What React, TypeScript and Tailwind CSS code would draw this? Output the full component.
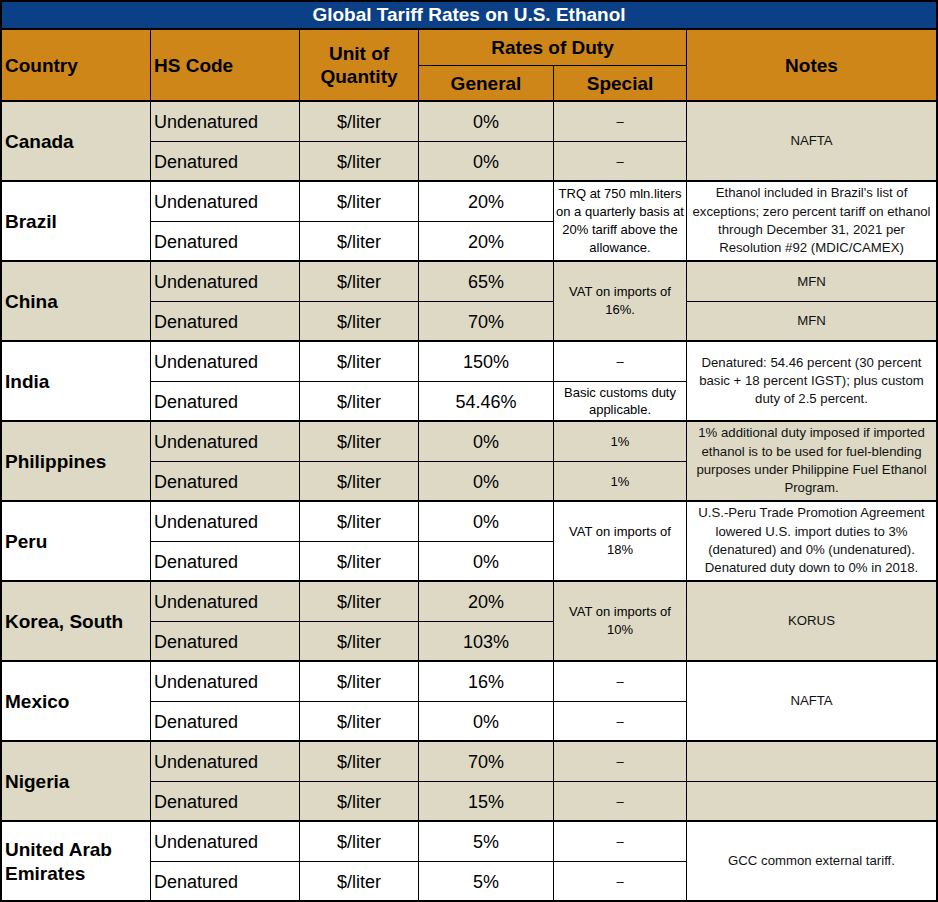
import React from "react";

type Pair = [string, string];

// text lines are given one by one so the wrapping matches the sheet
const rows: {
  name: string[];
  general: Pair;
  special: string[][];
  notes: string[][];
}[] = [
  {
    name: ["Canada"],
    general: ["0%", "0%"],
    special: [["–"], ["–"]],
    notes: [["NAFTA"]],
  },
  {
    name: ["Brazil"],
    general: ["20%", "20%"],
    special: [["TRQ at 750 mln.liters", "on a quarterly basis at", "20% tariff above the", "allowance."]],
    notes: [
      [
        "Ethanol included in Brazil's list of",
        "exceptions; zero percent tariff on ethanol",
        "through December 31, 2021 per",
        "Resolution #92 (MDIC/CAMEX)",
      ],
    ],
  },
  {
    name: ["China"],
    general: ["65%", "70%"],
    special: [["VAT on imports of", "16%."]],
    notes: [["MFN"], ["MFN"]],
  },
  {
    name: ["India"],
    general: ["150%", "54.46%"],
    special: [["–"], ["Basic customs duty", "applicable."]],
    notes: [
      [
        "Denatured: 54.46 percent (30 percent",
        "basic + 18 percent IGST); plus custom",
        "duty of 2.5 percent.",
      ],
    ],
  },
  {
    name: ["Philippines"],
    general: ["0%", "0%"],
    special: [["1%"], ["1%"]],
    notes: [
      [
        "1% additional duty imposed if imported",
        "ethanol is to be used for fuel-blending",
        "purposes under Philippine Fuel Ethanol",
        "Program.",
      ],
    ],
  },
  {
    name: ["Peru"],
    general: ["0%", "0%"],
    special: [["VAT on imports of", "18%"]],
    notes: [
      [
        "U.S.-Peru Trade Promotion Agreement",
        "lowered U.S. import duties to 3%",
        "(denatured) and 0% (undenatured).",
        "Denatured duty down to 0% in 2018.",
      ],
    ],
  },
  {
    name: ["Korea, South"],
    general: ["20%", "103%"],
    special: [["VAT on imports of", "10%"]],
    notes: [["KORUS"]],
  },
  {
    name: ["Mexico"],
    general: ["16%", "0%"],
    special: [["–"], ["–"]],
    notes: [["NAFTA"]],
  },
  {
    name: ["Nigeria"],
    general: ["70%", "15%"],
    special: [["–"], ["–"]],
    notes: [[""], [""]],
  },
  {
    name: ["United Arab", "Emirates"],
    general: ["5%", "5%"],
    special: [["–"], ["–"]],
    notes: [["GCC common external tariff."]],
  },
];

const Lines = ({ lines }: { lines: string[] }) => (
  <>
    {lines.map((l, i) => (
      <React.Fragment key={i}>
        {i > 0 && <br />}
        {l}
      </React.Fragment>
    ))}
  </>
);

export default function App() {
  return (
    <div className="w-[938px] h-[902px] bg-black p-[2px] flex flex-col gap-[2px] font-['Liberation_Sans',Arial,sans-serif] text-black">
      {/* title */}
      <div className="h-[26px] bg-[#0b3f86] text-white font-bold text-[19px] leading-[26px] text-center">
        Global Tariff Rates on U.S. Ethanol
      </div>

      {/* header */}
      <div className="grid grid-cols-[148px_148px_118px_134px_132px_249px] grid-rows-[35px_34px] gap-px bg-black font-bold text-[19px] leading-[23px]">
        <div className="row-span-2 bg-[#cf8618] flex items-center pl-[3px]">Country</div>
        <div className="row-span-2 bg-[#cf8618] flex items-center pl-[3px]">HS Code</div>
        <div className="row-span-2 bg-[#cf8618] flex items-center justify-center text-center">
          Unit of
          <br />
          Quantity
        </div>
        <div className="col-span-2 bg-[#cf8618] flex items-center justify-center">Rates of Duty</div>
        <div className="row-span-2 bg-[#cf8618] flex items-center justify-center">Notes</div>
        <div className="bg-[#cf8618] flex items-center justify-center">General</div>
        <div className="bg-[#cf8618] flex items-center justify-center">Special</div>
      </div>

      {/* countries */}
      {rows.map((r, i) => {
        const bg = i % 2 === 0 ? "bg-[#ddd9c4]" : "bg-white";
        const cell = `${bg} flex items-center`;
        return (
          <div
            key={r.name.join(" ")}
            className="grid grid-cols-[148px_148px_118px_134px_132px_249px] grid-rows-[39px_38px] gap-px bg-black"
          >
            <div className={`${cell} row-span-2 pl-[3px] pt-[1px] font-bold text-[19px] leading-[24px]`}>
              <span>
                <Lines lines={r.name} />
              </span>
            </div>
            {[0, 1].map((k) => (
              <React.Fragment key={k}>
                <div className={`${cell} pl-[3px] pt-[2px] text-[18px] ${k === 0 ? "row-start-1" : "row-start-2"} col-start-2`}>
                  {k === 0 ? "Undenatured" : "Denatured"}
                </div>
                <div className={`${cell} justify-center pt-[2px] text-[18px] ${k === 0 ? "row-start-1" : "row-start-2"} col-start-3`}>
                  $/liter
                </div>
                <div className={`${cell} justify-center pt-[2px] text-[18px] ${k === 0 ? "row-start-1" : "row-start-2"} col-start-4`}>
                  {r.general[k]}
                </div>
              </React.Fragment>
            ))}
            {r.special.length === 1 ? (
              <div className={`${cell} justify-center text-center col-start-5 row-start-1 row-span-2 text-[13px] leading-[18px]`}>
                <span>
                  <Lines lines={r.special[0]} />
                </span>
              </div>
            ) : (
              r.special.map((s, k) => (
                <div
                  key={k}
                  className={`${cell} justify-center text-center col-start-5 ${k === 0 ? "row-start-1" : "row-start-2"} text-[13px] leading-[17px]`}
                >
                  <span>
                    <Lines lines={s} />
                  </span>
                </div>
              ))
            )}
            {r.notes.length === 1 ? (
              <div className={`${cell} justify-center text-center col-start-6 row-start-1 row-span-2 text-[13.2px] leading-[18.3px] text-[#111]`}>
                <span>
                  <Lines lines={r.notes[0]} />
                </span>
              </div>
            ) : (
              r.notes.map((s, k) => (
                <div
                  key={k}
                  className={`${cell} justify-center text-center col-start-6 ${k === 0 ? "row-start-1" : "row-start-2"} text-[13.2px] leading-[18px] text-[#111]`}
                >
                  <span>
                    <Lines lines={s} />
                  </span>
                </div>
              ))
            )}
          </div>
        );
      })}
    </div>
  );
}
